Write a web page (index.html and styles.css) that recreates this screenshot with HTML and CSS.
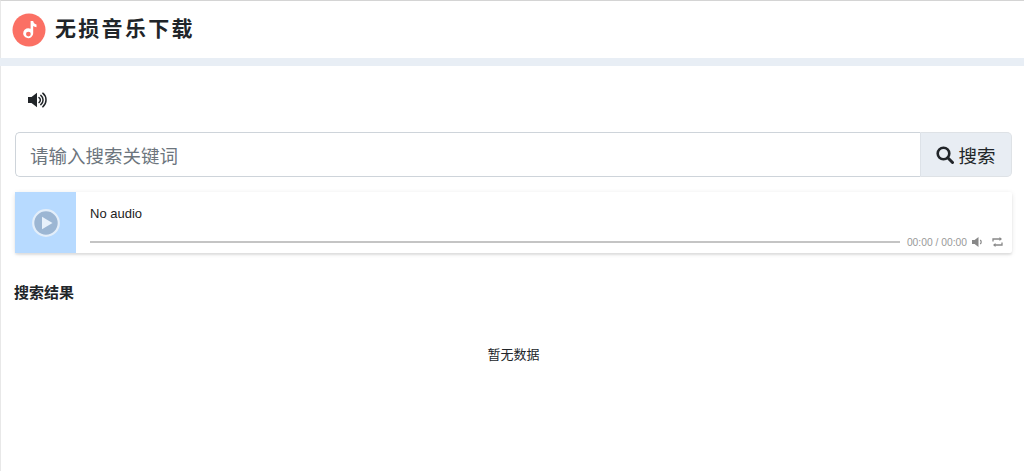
FILE: index.html
```html
<!DOCTYPE html>
<html lang="zh">
<head>
<meta charset="utf-8">
<title>无损音乐下载</title>
<link rel="stylesheet" href="styles.css">
</head>
<body>
<div class="page">
  <header class="topbar">
    <svg class="logo" viewBox="0 0 34 34" width="34" height="34"><circle cx="17" cy="17" r="16.5" fill="#fb7064"/><path fill-rule="evenodd" d="M18.600 8h2.600c.2 1.800 1.300 3.100 3.300 3.500v2.800c-1.300-.1-2.400-.6-3.300-1.300v7.200a5 5 0 1 1-2.600-4.400zM16.400 18.700a2.400 2.400 0 1 0 0 4.800 2.400 2.400 0 0 0 0-4.800z" fill="#fff"/></svg>
    <h1 class="brand">无损音乐下载</h1>
  </header>
  <div class="band"></div>
  <main class="content">
    <div class="sound-row">
      <svg class="sound" viewBox="0 0 20 16" width="20" height="16"><path d="M0 5h3.500L9 .8v14.400L3.500 11H0z" fill="#212529"/><path d="M11 5.500a3 3 0 0 1 0 5M12.800 3.400a5.800 5.800 0 0 1 0 9.200M14.800 1.200a8.800 8.800 0 0 1 0 13.600" fill="none" stroke="#212529" stroke-width="1.500" stroke-linecap="round"/></svg>
    </div>
    <form class="search">
      <input class="search-input" type="text" placeholder="请输入搜索关键词">
      <button class="search-btn" type="button">
        <svg class="search-icon" viewBox="0 0 18 18" width="18" height="18"><circle cx="7.500" cy="7.500" r="5.800" fill="none" stroke="#212529" stroke-width="2.600"/><path d="M11.800 11.800l4.700 4.700" stroke="#212529" stroke-width="3" stroke-linecap="round"/></svg>
        <span>搜索</span>
      </button>
    </form>
    <section class="player">
      <div class="cover">
        <div class="play"><svg viewBox="0 0 28 28" width="28" height="28"><circle cx="14" cy="14" r="12.800" fill="#9cb6d3" stroke="#e3eefa" stroke-width="2.200"/><path d="M10 7.800l10.500 6.200-10.500 6.200z" fill="#e8f1fb"/></svg></div>
      </div>
      <div class="info">
        <div class="track">No audio</div>
        <div class="controls">
          <div class="bar"></div>
          <span class="time">00:00 / 00:00</span>
          <svg class="ctl" viewBox="0 0 11 10" width="11" height="10"><path d="M0 3h2.600L6.500 0v10L2.600 7H0z" fill="#888"/><path d="M8.200 3a2.500 2.500 0 0 1 0 4" fill="none" stroke="#888" stroke-width="1.200"/></svg>
          <svg class="ctl" viewBox="0 0 11 10" width="11" height="10"><path d="M1 4.500V2h7M10 5.500V8H3" fill="none" stroke="#888" stroke-width="1.300"/><path d="M7.500 0l2.500 2-2.500 2zM3.500 6L1 8l2.500 2z" fill="#888"/></svg>
        </div>
      </div>
    </section>
    <h2 class="results">搜索结果</h2>
    <p class="empty">暂无数据</p>
  </main>
</div>
</body>
</html>
```
FILE: styles.css
```css
* { box-sizing: border-box; }
html, body { margin: 0; height: 100%; overflow: hidden; }
body {
  background: #fff;
  color: #212529;
  font-family: "Liberation Sans", "Noto Sans CJK SC", sans-serif;
}
.page {
  height: 471px;
  border-top: 1px solid #d4d4d4;
  border-left: 1px solid #e8e8e8;
  display: flex;
  flex-direction: column;
}
.topbar {
  height: 57px;
  display: flex;
  align-items: center;
  gap: 9px;
  padding-left: 11px;
}
.logo { flex: none; }
.brand {
  margin: -2px 0 0;
  font-size: 21px;
  font-weight: 700;
  letter-spacing: 2.300px;
  line-height: 1;
}
.band { height: 8px; background: #e8eef5; margin-left: -1px; }
.content {
  flex: 1;
  padding: 0 12px 0 14px;
  display: flex;
  flex-direction: column;
}
.sound-row { height: 66px; padding: 26px 0 0 13px; }
.sound { display: block; }
.search { display: flex; height: 45px; }
.search-input {
  flex: 1;
  min-width: 0;
  border: 1px solid #ced4da;
  border-right: 0;
  border-radius: 5px 0 0 5px;
  padding: 5px 15px 0 14px;
  font: 18.500px "Liberation Sans", "Noto Sans CJK SC", sans-serif;
  color: #495057;
  outline: none;
}
.search-input::placeholder { color: #6c757d; opacity: 1; }
.search-btn {
  width: 92px;
  flex: none;
  display: flex;
  align-items: center;
  justify-content: center;
  gap: 4px;
  background: #e8edf3;
  border: 1px solid #dee2e6;
  border-left: 1px solid #dde2e8;
  border-radius: 0 5px 5px 0;
  color: #212529;
  font: 18.500px "Liberation Sans", "Noto Sans CJK SC", sans-serif;
  padding: 0;
}
.search-icon { flex: none; }
.player {
  margin-top: 15px;
  height: 61px;
  display: flex;
  border-radius: 2px;
  background: #fff;
  box-shadow: 0 2px 2px 0 rgba(0,0,0,.07), 0 1px 5px 0 rgba(0,0,0,.1);
}
.cover {
  width: 61px;
  flex: none;
  background: #b7daff;
  display: flex;
  align-items: center;
  justify-content: center;
}
.play { width: 28px; height: 28px; }
.play svg { display: block; }
.info {
  flex: 1;
  min-width: 0;
  padding: 15px 9px 0 14px;
  display: flex;
  flex-direction: column;
}
.track { font-size: 13px; line-height: 14px; color: #222; }
.controls {
  margin-top: 15px;
  height: 12px;
  display: flex;
  align-items: center;
}
.bar { flex: 1; height: 2px; background: #c4c4c4; margin-right: 7px; }
.time { font-size: 10.300px; color: #999; margin-right: 5px; }
.ctl { flex: none; }
.ctl + .ctl { margin-left: 9px; }
.results {
  margin: 30px 0 0 -1px;
  font-size: 15px;
  line-height: 20px;
  font-weight: 700;
}
.empty {
  margin: 43px 0 0;
  font-size: 13px;
  line-height: 18px;
  text-align: center;
}
```
